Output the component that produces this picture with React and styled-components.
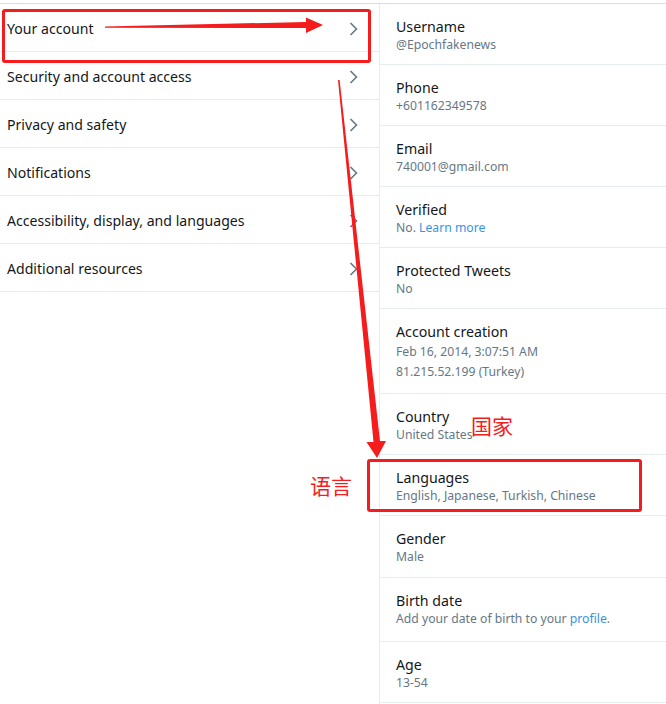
import React from "react";
import styled, { createGlobalStyle } from "styled-components";

const GlobalStyle = createGlobalStyle`
  html, body { margin: 0; padding: 0; background: #fff; }
  body { font-family: "Noto Sans", "Open Sans", Arial, sans-serif; }
`;

const Page = styled.div`
  position: relative;
  width: 666px;
  height: 704px;
  overflow: hidden;
  padding-top: 3px;
  box-sizing: border-box;
  background: #fff;
`;

const Columns = styled.div`
  display: grid;
  grid-template-columns: 380px 1fr;
  border-top: 1px solid #d9dde0;
  height: 100%;
`;

const Menu = styled.nav`
  border-right: 1px solid #e6ecf0;
  display: flex;
  flex-direction: column;
`;

const MenuItem = styled.div`
  display: flex;
  align-items: center;
  justify-content: space-between;
  height: 45px;
  border-bottom: 1px solid #e6ecf0;
  padding: 2px 21px 0 7px;
  font-size: 14.1px;
  color: #14171a;
`;

const Chevron = styled.svg`
  width: 9px;
  height: 14px;
  flex: none;
`;

const Details = styled.section`
  display: flex;
  flex-direction: column;
`;

const Row = styled.div`
  padding: 13px 16px ${(p) => p.$pb || 11}px;
  border-bottom: 1px solid #e6ecf0;
  display: flex;
  flex-direction: column;
`;

const Label = styled.div`
  font-size: 14.2px;
  line-height: 20px;
  color: #14171a;
`;

const Value = styled.div`
  font-size: 12.2px;
  line-height: ${(p) => p.$lh || 16}px;
  color: #657786;
`;

const Link = styled.span`
  color: #3394e3;
`;

const RedBox = styled.div`
  position: absolute;
  border: 3px solid #f41c1c;
  border-radius: 3px;
  box-sizing: border-box;
`;

const RedNote = styled.div`
  position: absolute;
  font-family: "Noto Sans CJK SC", sans-serif;
  font-size: 21px;
  line-height: 24px;
  color: #f41c1c;
`;

const Overlay = styled.svg`
  position: absolute;
  left: 0;
  top: 0;
  width: 666px;
  height: 704px;
  pointer-events: none;
`;

const menu = [
  "Your account",
  "Security and account access",
  "Privacy and safety",
  "Notifications",
  "Accessibility, display, and languages",
  "Additional resources",
];

function ChevronIcon() {
  return (
    <Chevron viewBox="0 0 9 14">
      <polyline points="1.5,1 7.5,7 1.5,13" fill="none" stroke="#657786" strokeWidth="1.6" />
    </Chevron>
  );
}

export default function App() {
  return (
    <>
      <GlobalStyle />
      <Page>
        <Columns>
          <Menu>
            {menu.map((m) => (
              <MenuItem key={m}>
                <span>{m}</span>
                <ChevronIcon />
              </MenuItem>
            ))}
          </Menu>
          <Details>
            <Row>
              <Label>Username</Label>
              <Value>@Epochfakenews</Value>
            </Row>
            <Row>
              <Label>Phone</Label>
              <Value>+601162349578</Value>
            </Row>
            <Row>
              <Label>Email</Label>
              <Value>740001@gmail.com</Value>
            </Row>
            <Row>
              <Label>Verified</Label>
              <Value>
                No. <Link>Learn more</Link>
              </Value>
            </Row>
            <Row>
              <Label>Protected Tweets</Label>
              <Value>No</Value>
            </Row>
            <Row $pb={11}>
              <Label>Account creation</Label>
              <Value $lh={20}>Feb 16, 2014, 3:07:51 AM</Value>
              <Value $lh={20}>81.215.52.199 (Turkey)</Value>
            </Row>
            <Row>
              <Label>Country</Label>
              <Value>United States</Value>
            </Row>
            <Row>
              <Label>Languages</Label>
              <Value>English, Japanese, Turkish, Chinese</Value>
            </Row>
            <Row $pb={12}>
              <Label>Gender</Label>
              <Value>Male</Value>
            </Row>
            <Row $pb={14}>
              <Label>Birth date</Label>
              <Value>
                Add your date of birth to your <Link>profile</Link>.
              </Value>
            </Row>
            <Row>
              <Label>Age</Label>
              <Value>13-54</Value>
            </Row>
          </Details>
        </Columns>

        <RedBox style={{ left: 2, top: 9, width: 369, height: 54 }} />
        <RedBox style={{ left: 367, top: 459, width: 275, height: 53 }} />
        <RedNote style={{ left: 471, top: 413 }}>国家</RedNote>
        <RedNote style={{ left: 310, top: 473 }}>语言</RedNote>

        <Overlay viewBox="0 0 666 704">
          <polygon
            points="105,26.5 306,22 306,17.5 323,25 306,33 306,28 105,27.8"
            fill="#f41c1c"
          />
          <polygon
            points="338,80 339.6,80 380,441 386,441 377,458 366.5,442 373.5,442"
            fill="#f41c1c"
          />
        </Overlay>
      </Page>
    </>
  );
}
